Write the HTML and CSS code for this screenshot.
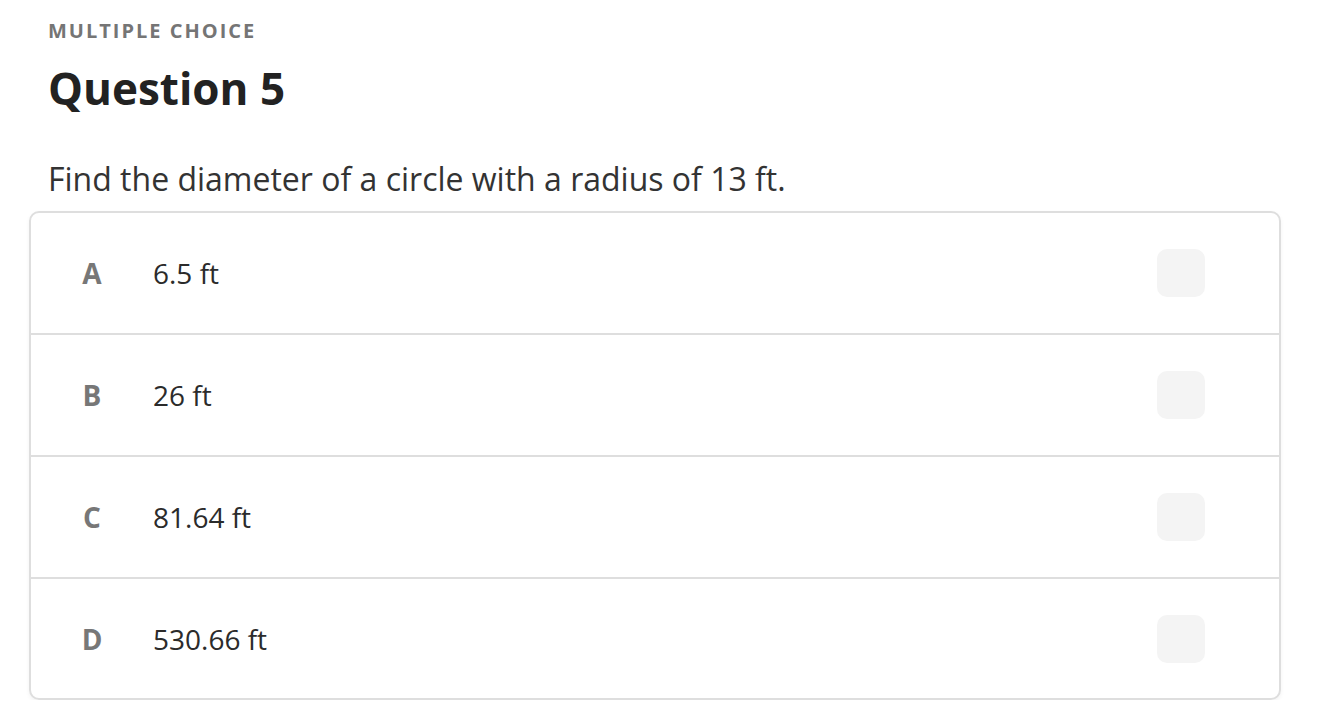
FILE: index.html
```html
<!DOCTYPE html>
<html lang="en">
<head>
<meta charset="utf-8">
<title>Question 5</title>
<link rel="stylesheet" href="styles.css">
</head>
<body>
<main class="page">
  <div class="kind">MULTIPLE CHOICE</div>
  <h1 class="title">Question 5</h1>
  <p class="prompt">Find the diameter of a circle with a radius of 13 ft.</p>
  <div class="choices">
    <div class="choice"><span class="letter">A</span><span class="answer">6.5 ft</span><span class="box"></span></div>
    <div class="choice"><span class="letter">B</span><span class="answer">26 ft</span><span class="box"></span></div>
    <div class="choice"><span class="letter">C</span><span class="answer">81.64 ft</span><span class="box"></span></div>
    <div class="choice"><span class="letter">D</span><span class="answer">530.66 ft</span><span class="box"></span></div>
  </div>
</main>
</body>
</html>
```
FILE: styles.css
```css
* { box-sizing: border-box; }
html, body { margin: 0; padding: 0; background: #fff; }
body { font-family: "Open Sans", "Noto Sans", sans-serif; color: #333; }
.page { padding: 17px 43px 0 48px; }
.kind {
  font-size: 20px;
  line-height: 28px;
  font-weight: 700;
  letter-spacing: 2px;
  color: #757575;
}
.title {
  margin: 15px 0 0;
  font-size: 44px;
  line-height: 56px;
  font-weight: 700;
  color: #222;
}
.prompt {
  margin: 41px 0 0;
  font-size: 32px;
  line-height: 44px;
  color: #333;
}
.choices {
  margin: 10px 0 0 -19px;
  border: 2px solid #dedede;
  border-radius: 10px;
  box-shadow: 0 2px 4px rgba(0,0,0,0.05);
  overflow: hidden;
}
.choice {
  display: flex;
  align-items: center;
  height: 122px;
  padding: 0 74px 0 50px;
  border-bottom: 2px solid #dedede;
}
.choice:last-child { border-bottom: 0; height: 119px; }
.letter {
  width: 22px;
  text-align: center;
  font-size: 28px;
  font-weight: 700;
  color: #777;
  margin-right: 50px;
}
.answer {
  flex: 1;
  font-size: 28px;
  color: #2b2b2b;
}
.box {
  width: 48px;
  height: 48px;
  border-radius: 10px;
  background: #f4f4f4;
}
```
